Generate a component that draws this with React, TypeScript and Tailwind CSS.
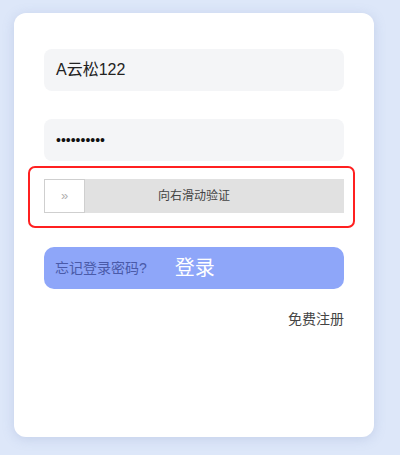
export default function App() {
  return (
    <div className="min-h-[455px] w-[400px] bg-[#dde7f9] pt-[13px] pl-[14px] font-['Liberation_Sans','Noto_Sans_CJK_SC',sans-serif]">
      <div className="relative h-[424px] w-[360px] rounded-[12px] bg-white pt-[36px] pl-[30px] shadow-[0_2px_12px_rgba(120,140,190,0.25)]">
        {/* Username */}
        <div className="flex h-[42px] w-[300px] items-center rounded-[8px] bg-[#f4f5f7] px-3 text-[16px] text-[#222]">
          A云松122
        </div>

        {/* Password */}
        <div className="mt-[28px] flex h-[42px] w-[300px] items-center rounded-[8px] bg-[#f4f5f7] px-3 text-[14px] text-[#111]">
          ••••••••••
        </div>

        {/* Slider captcha with highlight */}
        <div className="ml-[-16px] mt-[5px] w-[327px] rounded-[7px] border-2 border-[#ff2020] pt-[11px] pb-[13px] pl-[14px]">
          <div className="relative flex h-[34px] w-[300px] items-center justify-center bg-[#e1e1e1]">
            <div className="absolute left-0 top-0 flex h-[34px] w-[41px] items-center justify-center border border-[#cfcfcf] bg-white pb-[1px] text-[13px] text-[#b0b0b0]">
              »
            </div>
            <span className="text-[12px] text-[#444]">向右滑动验证</span>
          </div>
        </div>

        {/* Login button */}
        <div className="mt-[19px] flex h-[42px] w-[300px] items-center rounded-[10px] bg-[#8ea6f9] pl-[11px]">
          <span className="text-[14px] text-[#4a5aa8]">忘记登录密码?</span>
          <span className="ml-[28px] text-[20px] text-white">登录</span>
        </div>

        <div className="mt-[20px] w-[300px] text-right text-[14px] text-[#444]">免费注册</div>
      </div>
    </div>
  );
}
